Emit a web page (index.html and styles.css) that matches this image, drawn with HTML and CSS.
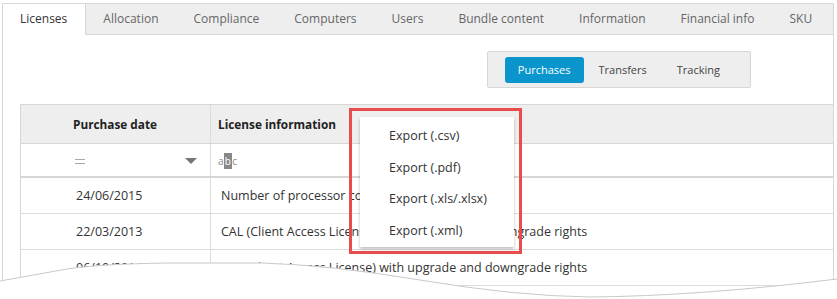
FILE: index.html
```html
<!DOCTYPE HTML><html>
<head>
  <meta name="viewport" content="width=device-width, initial-scale=1">
  <title>Licenses</title>
  <link rel="stylesheet" href="styles.css">
</head>
<body>
  <div class="panel">
    <div class="tabs">
      <div class="tab active">Licenses</div>
      <div class="tab">Allocation</div>
      <div class="tab">Compliance</div>
      <div class="tab">Computers</div>
      <div class="tab">Users</div>
      <div class="tab">Bundle content</div>
      <div class="tab">Information</div>
      <div class="tab">Financial info</div>
      <div class="tab">SKU</div>
    </div>

    <div class="toolbar">
      <div class="seg">
        <span class="segItem on">Purchases</span>
        <span class="segItem">Transfers</span>
        <span class="segItem">Tracking</span>
      </div>
    </div>

    <div class="grid">
      <div class="row head">
        <div class="cell c1">Purchase date</div>
        <div class="cell c2">License information</div>
      </div>
      <div class="row filter">
        <div class="cell c1"><span class="eq"></span><span class="caret"></span></div>
        <div class="cell c2"><span class="abc">a<b>b</b>c</span></div>
      </div>
      <div class="row">
        <div class="cell c1">24/06/2015</div>
        <div class="cell c2">Number of processor cores</div>
      </div>
      <div class="row">
        <div class="cell c1">22/03/2013</div>
        <div class="cell c2">CAL (Client Access License) with upgrade and downgrade rights</div>
      </div>
      <div class="row">
        <div class="cell c1">06/10/2014</div>
        <div class="cell c2">CAL (Client Access License) with upgrade and downgrade rights</div>
      </div>
    </div>
  </div>

  <!-- export menu, highlighted -->
  <div class="highlight"></div>
  <div class="menu">
    <div class="menuItem">Export (.csv)</div>
    <div class="menuItem">Export (.pdf)</div>
    <div class="menuItem">Export (.xls/.xlsx)</div>
    <div class="menuItem">Export (.xml)</div>
  </div>

  <svg class="tear" width="837" height="44" viewBox="0 255 837 44">
    <path d="M0 281 L67 269 Q100 264 167 263 L262 263 Q330 265 420 280 Q515 296 590 297 Q700 296 837 279 L837 299 L0 299 Z" fill="#fff"/>
    <path d="M0 281 L67 269 Q100 264 167 263 L262 263 Q330 265 420 280 Q515 296 590 297 Q700 296 837 279" fill="none" stroke="#c9c9c9" stroke-width="1"/>
  </svg>
</body>
</html>
```

FILE: styles.css
```css
html {font-family: "Segoe UI", "Open Sans", sans-serif; font-size: 12px; color: #333;}
body {margin: 0; width: 837px; height: 299px; overflow: hidden; position: relative; background: #fff;}

.panel {margin: 3px 3px 0 2px; height: 320px; border: 1px solid #d6d6d6; border-bottom: none;}

.tabs {display: flex; height: 30px; background: #eeeeee; border-bottom: 1px solid #d6d6d6;}
.tab {padding: 0 17.5px; line-height: 30px; color: #666;}
.tab.active {background: #fff; color: #333; border-right: 1px solid #d6d6d6; height: 31px; padding-left: 17px;}

.toolbar {display: flex; justify-content: flex-end; padding: 16px 82px 0 0;}
.seg {display: flex; align-items: center; height: 35px; padding: 0 15px 0 17px; background: #eeeeee; border: 1px solid #d6d6d6; border-radius: 2px; font-size: 11px;}
.segItem {padding: 0 15px; line-height: 26px; color: #444;}
.segItem.on {background: #0a96cc; color: #fff; border-radius: 3px; padding: 0 13px;}

.grid {margin: 16px 0 0 17px; border-top: 1px solid #d6d6d6; border-left: 1px solid #d6d6d6;}
.row {display: flex; height: 35px; border-bottom: 1px solid #dcdcdc;}
.cell {display: flex; align-items: center; font-size: 12.5px;}
.c1 {width: 190px; border-right: 1px solid #dcdcdc; padding-left: 55px; box-sizing: border-box;}
.c2 {flex: 1; padding-left: 10px;}
.head {height: 38px; background: #eeeeee; border-bottom: 1px solid #d6d6d6;}
.head .cell {font-weight: bold; color: #222; font-size: 11.8px;}
.head .c1 {padding-left: 52px;}
.head .c2 {padding-left: 7px;}
.filter {height: 32px; border-bottom: 2px solid #d6d6d6;}
.filter .c1 {justify-content: space-between; padding: 1px 13px 0 54px;}

.eq {width: 10px; height: 3px; border-top: 1px solid #aaa; border-bottom: 1px solid #aaa; margin-top: 2px;}
.caret {width: 0; height: 0; border-left: 6px solid transparent; border-right: 6px solid transparent; border-top: 6px solid #777;}
.abc {font-size: 10px; color: #888; margin: 2px 0 0 -3px; letter-spacing: 0.3px;}
.abc b {font-weight: normal; background: #888; color: #fff; padding: 1px 1px;}

.highlight {position: absolute; left: 349px; top: 108px; width: 167px; height: 140px; border: 3px solid #e84c4c;}
.menu {position: absolute; left: 360px; top: 117px; width: 154px; height: 127px; padding-top: 3px; background: #fff; box-shadow: 0 2px 3px rgba(0,0,0,0.25);}
.menuItem {height: 31.7px; line-height: 32px; padding-left: 29px; font-size: 12.5px; color: #333;}

.tear {position: absolute; left: 0; top: 255px;}
```
